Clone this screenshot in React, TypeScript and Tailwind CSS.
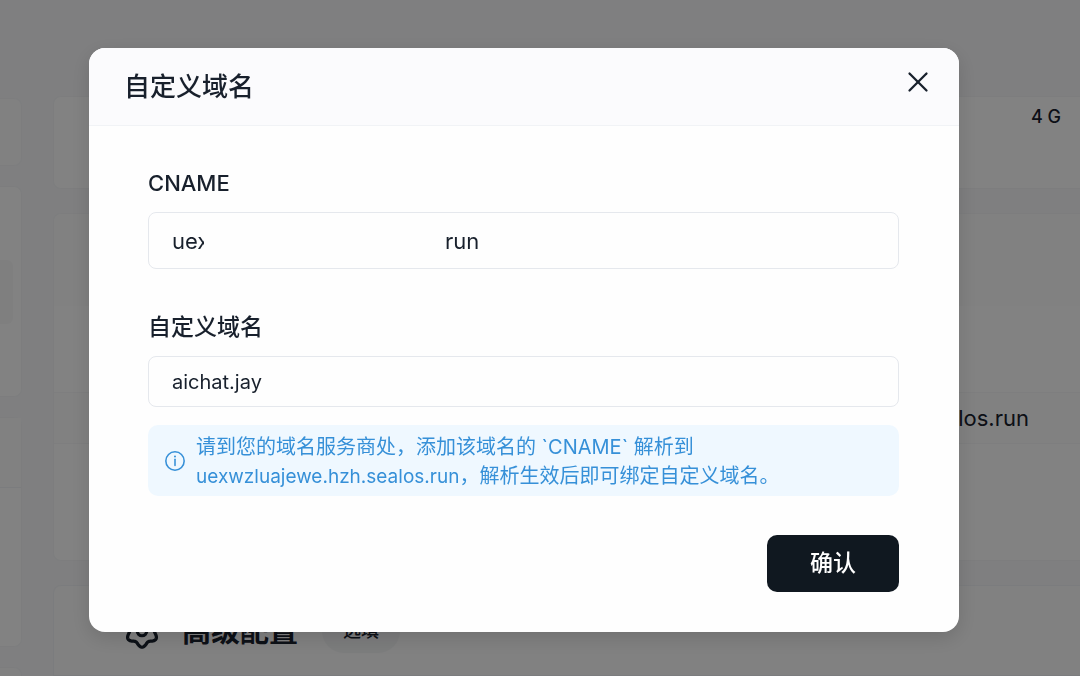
import { X } from "lucide-react";
import { useState } from "react";

const CNAME_TARGET = "uexwzluajewe.hzh.sealos.run";

const GEAR_POINTS = Array.from({ length: 120 }, (_, i) => {
  const a = (i / 120) * Math.PI * 2;
  const r = 15 + 2 * Math.cos(6 * (a - Math.PI / 2));
  return `${(20 + r * Math.cos(a)).toFixed(2)},${(20 + r * Math.sin(a)).toFixed(2)}`;
}).join(" ");

function GearIcon() {
  return (
    <svg viewBox="0 0 40 40" className="size-[38px] shrink-0" fill="none" stroke="currentColor" strokeWidth={3.4} aria-hidden="true">
      <polygon points={GEAR_POINTS} strokeLinejoin="round" />
      <circle cx="20" cy="20" r="5" />
    </svg>
  );
}

function InfoIcon() {
  return (
    <svg viewBox="0 0 24 24" className="size-[22px] shrink-0" fill="none" stroke="currentColor" strokeWidth={1.7} aria-hidden="true">
      <circle cx="12" cy="12" r="10" />
      <path d="M12 10.2v6.6" strokeLinecap="round" />
      <circle cx="12" cy="7.2" r="1.1" fill="currentColor" stroke="none" />
    </svg>
  );
}

function Sidebar() {
  return (
    <aside className="w-[22px] shrink-0 overflow-hidden pt-[98px]" aria-hidden="true">
      <div className="flex flex-col gap-5">
        <div className="h-[68px] rounded-r-lg border border-l-0 border-[#eff0f2] bg-[#f7f7f8]" />
        <div className="h-[211px] rounded-r-lg border border-l-0 border-[#eff0f2] bg-[#fafafa] pt-[73px]">
          <div className="mr-2 h-16 rounded-r-md bg-[#f3f3f4]" />
        </div>
        <div className="h-[230px] rounded-r-lg border border-l-0 border-[#eff0f2] bg-[#fafafa]">
          <div className="h-[70px] border-b border-[#eceef1] bg-[#f7f7f8]" />
        </div>
        <div className="h-40 rounded-r-lg border border-l-0 border-[#eff0f2] bg-[#f7f7f8]" />
      </div>
    </aside>
  );
}

function DeployForm() {
  return (
    <main className="flex min-w-0 flex-1 flex-col gap-6 pt-24">
      <section className="flex h-[93px] justify-end rounded-l-lg border border-r-0 border-[#eff0f2] bg-[#fafafa] pt-1.5 pr-[19px]">
        <span className="text-lg font-medium">4 G</span>
      </section>
      <section className="h-[348px] rounded-l-lg border border-r-0 border-[#eff0f2] bg-[#fafafa]">
        <div className="h-[92px] rounded-tl-lg bg-[#f7f7f7]" />
        <div className="mt-[86px] flex h-[52px] items-center justify-end border-y border-[#f1f2f3] bg-[#f8f8f8] pr-[51px]">
          <span className="text-[22px]">{CNAME_TARGET}</span>
        </div>
      </section>
      <section className="h-[91px] overflow-hidden rounded-tl-lg border border-r-0 border-[#eceef1] bg-[#f7f7f7]">
        <div className="flex h-[90px] items-center pl-[69px]">
          <GearIcon />
          <h2 className="ml-[21px] text-[29px] leading-none font-bold">高级配置</h2>
          <span className="ml-6 rounded-full bg-[#eeeff0] px-[21px] py-3 text-lg leading-5 font-medium">选填</span>
        </div>
      </section>
    </main>
  );
}

function DomainDialog() {
  const [domain, setDomain] = useState("aichat.jay");
  return (
    <div className="fixed inset-0 flex items-start bg-black/48 pt-12 pr-[121px] pl-[89px]">
      <div
        role="dialog"
        aria-modal="true"
        aria-labelledby="dialog-title"
        className="min-w-0 flex-1 overflow-hidden rounded-2xl bg-[#fefefe] shadow-[0_6px_20px_rgba(0,0,0,0.14)]"
      >
        <header className="flex h-[78px] items-center justify-between border-b border-[#f1f3f6] bg-[#fbfbfd] pr-[25px] pl-[35px]">
          <h1 id="dialog-title" className="text-[26px] font-medium">自定义域名</h1>
          <button type="button" aria-label="关闭" className="mb-2.5 flex size-8 items-center justify-center">
            <X className="size-[34px] shrink-0" strokeWidth={1.6} />
          </button>
        </header>
        <form className="pt-[39px] pr-[60px] pb-10 pl-[59px]" onSubmit={(e) => e.preventDefault()}>
          <div id="cname-label" className="text-[22px] leading-9 font-medium">CNAME</div>
          <div
            role="group"
            aria-labelledby="cname-label"
            className="mt-[11px] flex h-[57px] items-center rounded-lg border border-[#e5e8ed] px-[23px] text-[22px] leading-8"
          >
            <span className="w-8 overflow-hidden whitespace-nowrap">uex</span>
            <span className="ml-[241px]">run</span>
          </div>
          <label htmlFor="domain" className="mt-10 block text-[23px] leading-9 font-medium">自定义域名</label>
          <input
            id="domain"
            value={domain}
            onChange={(e) => setDomain(e.target.value)}
            className="mt-[11px] block h-[51px] w-full rounded-lg border border-[#e5e8ed] bg-transparent px-[23px] text-xl outline-none"
          />
          <div className="mt-[18px] flex items-center gap-2.5 rounded-[10px] bg-[#eff8ff] px-4 py-[5px] text-[#3690d8]">
            <InfoIcon />
            <p className="pt-[3px] text-xl leading-[29px]">
              请到您的域名服务商处，添加该域名的 `CNAME` 解析到
              <br />
              <span className="text-[19px]">{CNAME_TARGET}</span>，解析生效后即可绑定自定义域名。
            </p>
          </div>
          <div className="mt-[39px] flex justify-end">
            <button type="submit" className="h-[57px] rounded-[10px] bg-[#101820] px-[43px] text-[23px] font-medium text-white">
              确认
            </button>
          </div>
        </form>
      </div>
    </div>
  );
}

export default function App() {
  return (
    <div className="h-screen overflow-hidden bg-[#f3f3f5] font-['Inter','Noto_Sans_CJK_SC',sans-serif] text-[#18202c]">
      <div className="flex gap-[31px]">
        <Sidebar />
        <DeployForm />
      </div>
      <DomainDialog />
    </div>
  );
}
